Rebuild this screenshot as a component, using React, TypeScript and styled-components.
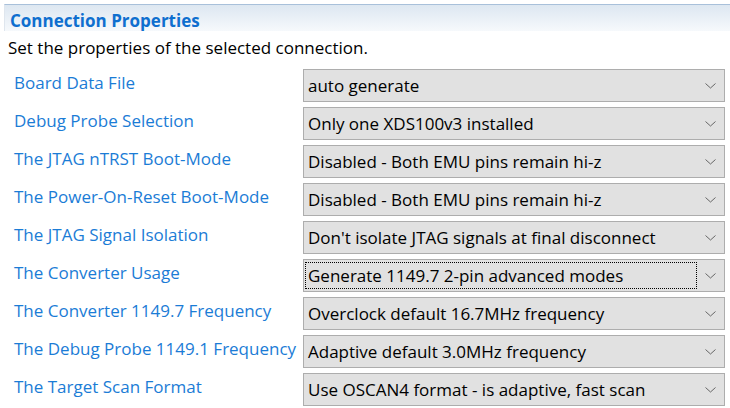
import React from "react";
import styled, { createGlobalStyle } from "styled-components";

const Global = createGlobalStyle`
  html, body { margin: 0; padding: 0; background: #ffffff; }
  body { font-family: "Open Sans", "Noto Sans", sans-serif; }
`;

const Page = styled.div`
  width: 730px;
  height: 408px;
  overflow: hidden;
  padding-top: 4px;
  box-sizing: border-box;
`;

const Header = styled.div`
  margin-left: 4px;
  height: 27px;
  box-sizing: border-box;
  border-top: 1px solid #a8c0da;
  border-left: 1px solid #dfe6ee;
  background: linear-gradient(#dde7f1, #f6f9fc);
  padding: 6px 0 0 5px;
`;

const Title = styled.div`
  font-size: 17px;
  line-height: 20px;
  font-weight: 700;
  color: #0f6fcf;
  white-space: nowrap;
`;

const Subtitle = styled.div`
  padding-left: 8px;
  margin-top: 6px;
  font-size: 17px;
  color: #000;
  line-height: 22px;
`;

const Form = styled.div`
  display: grid;
  grid-template-columns: 289px 422px;
  row-gap: 5px;
  padding-left: 14px;
  margin-top: 10px;
`;

const Label = styled.div`
  font-size: 17px;
  color: #1b7cd6;
  line-height: 22px;
  padding-top: 3px;
  white-space: nowrap;
`;

const Select = styled.div`
  position: relative;
  height: 33px;
  box-sizing: border-box;
  border: 1px solid #adadad;
  background: #e1e1e1;
  display: flex;
  align-items: center;
  padding-left: 4px;
  font-size: 17px;
  color: #000;
  white-space: nowrap;
`;

const Focus = styled.div<{ $on: boolean }>`
  position: absolute;
  left: 1px;
  top: 2px;
  bottom: 2px;
  right: 27px;
  border: 1px dotted ${(p) => (p.$on ? "#000" : "transparent")};
  pointer-events: none;
`;

const Chevron = styled.svg`
  position: absolute;
  right: 8px;
  top: 50%;
  margin-top: -3px;
`;

const rows: [string, string, boolean?][] = [
  ["Board Data File", "auto generate"],
  ["Debug Probe Selection", "Only one XDS100v3 installed"],
  ["The JTAG nTRST Boot-Mode", "Disabled - Both EMU pins remain hi-z"],
  ["The Power-On-Reset Boot-Mode", "Disabled - Both EMU pins remain hi-z"],
  ["The JTAG Signal Isolation", "Don't isolate JTAG signals at final disconnect"],
  ["The Converter Usage", "Generate 1149.7 2-pin advanced modes", true],
  ["The Converter 1149.7 Frequency", "Overclock default 16.7MHz frequency"],
  ["The Debug Probe 1149.1 Frequency", "Adaptive default 3.0MHz frequency"],
  ["The Target Scan Format", "Use OSCAN4 format - is adaptive, fast scan"],
];

export default function App() {
  return (
    <Page>
      <Global />
      <Header>
        <Title>Connection Properties</Title>
      </Header>
      <Subtitle>Set the properties of the selected connection.</Subtitle>
      <Form>
        {rows.map(([label, value, focus]) => (
          <React.Fragment key={label}>
            <Label>{label}</Label>
            <Select>
              <Focus $on={!!focus} />
              {value}
              <Chevron width="11" height="6" viewBox="0 0 11 6">
                <path d="M0.5 0.5 L5.5 5 L10.5 0.5" fill="none" stroke="#666" strokeWidth="1" />
              </Chevron>
            </Select>
          </React.Fragment>
        ))}
      </Form>
    </Page>
  );
}
